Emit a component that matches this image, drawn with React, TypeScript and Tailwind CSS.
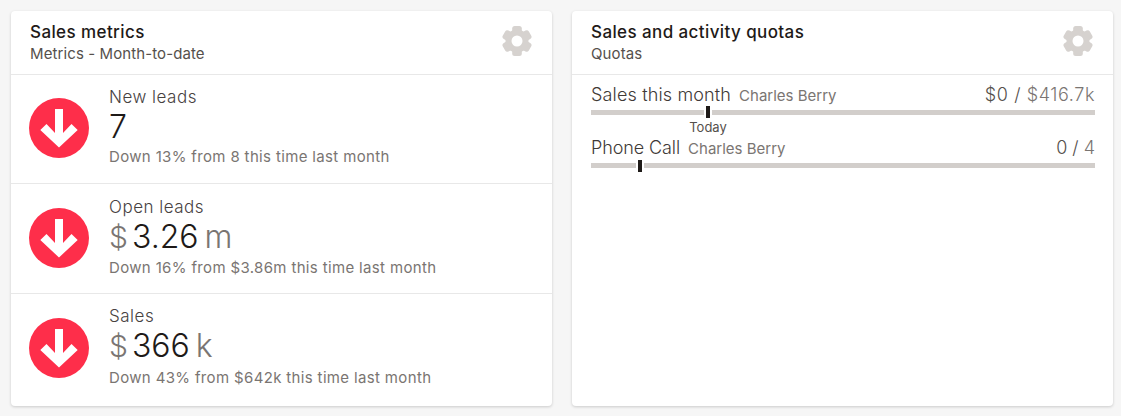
import React from 'react';

const font = "font-['Inter',sans-serif]";

const Gear = () => (
    <svg viewBox="0 0 30 30" className="w-[30px] h-[30px] fill-[#d6d2cf]">
        <circle cx="15" cy="15" r="11.5" />
        {[0, 60, 120, 180, 240, 300].map((deg) => (
            <rect key={deg} x="10.2" y="0" width="9.6" height="9" rx="2.5" transform={`rotate(${deg} 15 15)`} />
        ))}
        <circle cx="15" cy="15" r="5.5" fill="#fff" />
    </svg>
);

const DownIcon = () => (
    <svg viewBox="0 0 60 60" className="w-[60px] h-[60px] shrink-0">
        <circle cx="30" cy="30" r="30" fill="#fe2e4a" />
        <path d="M26 11H34V35L42.5 26L48.7 32L30 49.5L11.3 32L17.5 26L26 35Z" fill="#fff" />
    </svg>
);

type Metric = {
    label: string;
    prefix?: string;
    value: string;
    suffix?: string;
    note: string;
    row: string; // height + top padding of the row
    labelRow: string; // height of the label line
    noteGap: string;
};

const metrics: Metric[] = [
    { label: 'New leads', value: '7', note: 'Down 13% from 8 this time last month', row: 'h-[109px] pt-[23px]', labelRow: 'leading-[22px]', noteGap: 'mt-[1px]' },
    { label: 'Open leads', prefix: '$', value: '3.26', suffix: 'm', note: 'Down 16% from $3.86m this time last month', row: 'h-[110px] pt-[24px]', labelRow: 'leading-[22px]', noteGap: 'mt-[2px]' },
    { label: 'Sales', prefix: '$', value: '366', suffix: 'k', note: 'Down 43% from $642k this time last month', row: 'h-[112px] pt-[24px]', labelRow: 'leading-[21px]', noteGap: 'mt-[3px]' },
];

const CardHeader = ({ title, subtitle }: { title: string; subtitle: string }) => (
    <div className="h-[64px] shrink-0 flex justify-between border-b border-[#e8e8e8] pl-[19px] pr-[20px] pt-[10px]">
        <div>
            <div className="text-[17px] tracking-[0.4px] leading-[23px] font-medium text-[#1e1a18]">{title}</div>
            <div className="text-[15px] tracking-[0.1px] leading-[20px] text-[#55504c]">{subtitle}</div>
        </div>
        <div className="mt-[5px]">
            <Gear />
        </div>
    </div>
);

type QuotaRowProps = {
    name: string;
    owner: string;
    current: string;
    target: string;
    mark: string;
    markTop: string;
    nameTracking: string;
    amountTracking: string;
    today?: boolean;
};

const QuotaRow = ({ name, owner, current, target, mark, markTop, nameTracking, amountTracking, today }: QuotaRowProps) => (
    <div>
        <div className="flex items-baseline h-[26px]">
            <span className={`text-[18px] font-light text-[#3f3a37] ${nameTracking}`}>{name}</span>
            <span className="ml-[8px] text-[15px] text-[#7a7572]">{owner}</span>
            <span className={`ml-auto text-[18px] font-light text-[#55504c] ${amountTracking}`}>
                {current} / <span className="text-[#7a7572]">{target}</span>
            </span>
        </div>
        <div className="relative h-[5px] bg-[#d2cecb] mt-[3px]">
            <div className={`absolute h-[12px] w-[8px] bg-[#1e1a18] border-x-2 border-white ${markTop} ${mark}`} />
            {today && (
                <div className={`absolute top-[9px] ml-[4px] -translate-x-1/2 text-[13px] leading-[16px] text-[#55504c] ${mark}`}>Today</div>
            )}
        </div>
    </div>
);

export default function App() {
    return (
        <div className={`w-[1121px] h-[416px] bg-[#f6f6f6] flex gap-[20px] pl-[11px] pt-[11px] ${font}`}>
            <div className="w-[541px] h-[395px] bg-white rounded-[4px] shadow-[0_1px_3px_rgba(0,0,0,0.18)] flex flex-col">
                <CardHeader title="Sales metrics" subtitle="Metrics - Month-to-date" />
                {metrics.map((m, idx) => (
                    <div key={m.label} className={`${m.row} flex items-start pl-[18px] ${idx < 2 ? 'border-b border-[#e8e8e8]' : ''}`}>
                        <DownIcon />
                        <div className="ml-[20px] mt-[-12px]">
                            <div className={`text-[17px] tracking-[0.5px] font-light text-[#47423f] ${m.labelRow}`}>{m.label}</div>
                            <div className="text-[32px] leading-[38px] font-light text-[#1e1a18] flex items-baseline">
                                {m.prefix && <span className="text-[#7a7572] mr-[4px] text-[30px]">{m.prefix}</span>}
                                <span>{m.value}</span>
                                {m.suffix && <span className="text-[#7a7572] ml-[6px]">{m.suffix}</span>}
                            </div>
                            <div className={`text-[15px] tracking-[0.35px] leading-[20px] text-[#7a7572] ${m.noteGap}`}>{m.note}</div>
                        </div>
                    </div>
                ))}
            </div>
            <div className="w-[541px] h-[395px] bg-white rounded-[4px] shadow-[0_1px_3px_rgba(0,0,0,0.18)] flex flex-col">
                <CardHeader title="Sales and activity quotas" subtitle="Quotas" />
                <div className="pl-[19px] pr-[18px] pt-[6px] flex flex-col gap-[19px]">
                    <QuotaRow name="Sales this month" owner="Charles Berry" current="$0" target="$416.7k" mark="left-[113px]" markTop="top-[-4px]" nameTracking="tracking-[0.15px]" amountTracking="tracking-[0.6px]" today />
                    <QuotaRow name="Phone Call" owner="Charles Berry" current="0" target="4" mark="left-[45px]" markTop="top-[-3px]" nameTracking="tracking-[-0.1px]" amountTracking="tracking-[0px]" />
                </div>
            </div>
        </div>
    );
}
